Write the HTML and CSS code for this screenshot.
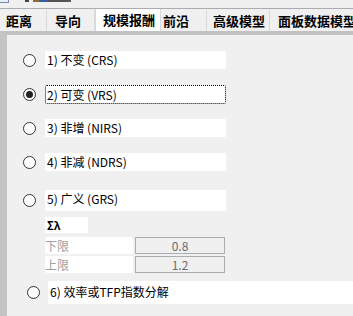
FILE: index.html
```html
<!DOCTYPE html>
<html lang="zh">
<head>
    <meta charset="UTF-8">
    <title>规模报酬</title>
    <link rel="stylesheet" href="styles.css">
</head>
<body>
    <!-- window strip -->
    <div class="topbar">
        <span class="win-box"></span>
        <span class="win-icon"></span>
    </div>

    <!-- Tabs -->
    <div class="tabs">
        <div class="tab tab-1">距离</div>
        <div class="tab tab-2">导向</div>
        <div class="tab tab-active">规模报酬</div>
        <div class="tab tab-4">前沿</div>
        <div class="tab tab-5">高级模型</div>
        <div class="tab tab-6">面板数据模型</div>
    </div>

    <!-- Panel -->
    <div class="panel">
        <div class="options">
            <div class="option">
                <span class="radio"></span>
                <span class="label">1) 不变 (CRS)</span>
            </div>
            <div class="option">
                <span class="radio checked"></span>
                <span class="label focused">2) 可变 (VRS)</span>
            </div>
            <div class="option">
                <span class="radio"></span>
                <span class="label">3) 非增 (NIRS)</span>
            </div>
            <div class="option">
                <span class="radio"></span>
                <span class="label">4) 非减 (NDRS)</span>
            </div>
            <div class="option option-5">
                <span class="radio"></span>
                <span class="label">5) 广义 (GRS)</span>
            </div>
        </div>

        <div class="bounds">
            <div class="sigma">Σλ</div>
            <div class="bound-row">
                <span class="bound-label">下限</span>
                <span class="bound-input">0.8</span>
            </div>
            <div class="bound-row">
                <span class="bound-label">上限</span>
                <span class="bound-input">1.2</span>
            </div>
        </div>

        <div class="option option-6">
            <span class="radio"></span>
            <span class="label wide">6) 效率或TFP指数分解</span>
        </div>
    </div>
</body>
</html>
```

FILE: styles.css
```css
/* Global */
body {
    margin: 0;
    padding: 0;
    width: 353px;
    height: 316px;
    overflow: hidden;
    background: #f0f0f0;
    font-family: "Noto Sans CJK SC", "Liberation Sans", sans-serif;
    font-size: 12px;
    color: #000;
}

/* Window strip */
.topbar {
    height: 8px;
    display: flex;
    align-items: flex-start;
    background: #f0f0f0;
    border-bottom: 1px solid #a9adb3;
}

.win-box {
    width: 8px;
    height: 2px;
    border-right: 1px solid #7a8ca8;
    border-bottom: 1px solid #7a8ca8;
    background: #e8eef6;
}

.win-icon {
    margin-left: 16px;
    width: 46px;
    height: 2px;
    background: linear-gradient(90deg, #444 0 4px, transparent 4px 8px, #8a6b3a 8px 14px, #3c5da0 14px 22px, #555 22px 46px);
}

/* Tabs */
.tabs {
    display: flex;
    height: 22px;
    white-space: nowrap;
    overflow: hidden;
}

.tab {
    box-sizing: border-box;
    height: 22px;
    margin-top: 1px;
    padding-left: 6px;
    font-size: 13px;
    font-weight: bold;
    line-height: 21px;
    background: #f0f0f0;
    border-right: 1px solid #d9d9d9;
    flex-shrink: 0;
}

.tab-1 { width: 47px; }
.tab-2 { width: 48px; padding-left: 8px; }
.tab-4 { width: 46px; padding-left: 2px; }
.tab-5 { width: 63px; padding-left: 6px; }
.tab-6 { width: 90px; padding-left: 8px; border-right: none; }

.tab-active {
    width: 66px;
    height: 23px;
    margin-top: 0;
    padding-left: 7px;
    background: #fff;
    border-right: 1px solid #d9d9d9;
    border-left: 1px solid #d9d9d9;
    line-height: 22px;
}

/* Panel */
.panel {
    box-sizing: border-box;
    height: 285px;
    border-top: 4px solid #c2c2c2;
    border-left: 7px solid #c4c4c4;
    padding-top: 16px;
    background: #f0f0f0;
}

.options {
    display: flex;
    flex-direction: column;
    gap: 16px;
}

.option {
    display: flex;
    align-items: center;
    height: 18px;
}

.option-5 {
    margin-top: 3px;
    height: 21px;
}

.radio {
    box-sizing: border-box;
    width: 13px;
    height: 13px;
    margin-left: 16px;
    margin-right: 9px;
    border: 1px solid #333;
    border-radius: 50%;
    background: #fff;
    display: flex;
    align-items: center;
    justify-content: center;
}

.radio.checked::after {
    content: "";
    width: 7px;
    height: 7px;
    border-radius: 50%;
    background: #222;
}

.label {
    box-sizing: border-box;
    width: 181px;
    height: 100%;
    padding-left: 2px;
    background: #fff;
    line-height: 17px;
}

.label.focused {
    height: 19px;
    border: 1px dotted #000;
    border-radius: 2px;
    padding-left: 1px;
}

/* Bounds */
.bounds {
    margin-top: 6px;
    margin-left: 38px;
    display: flex;
    flex-direction: column;
    gap: 2px;
}

.sigma {
    width: 43px;
    height: 16px;
    padding-left: 2px;
    box-sizing: border-box;
    background: #fff;
    font-size: 11px;
    font-weight: bold;
    line-height: 16px;
    margin-bottom: 2px;
}

.bound-row {
    display: flex;
    gap: 2px;
    height: 17px;
}

.bound-label {
    width: 88px;
    background: #fff;
    color: #a0a0a0;
    line-height: 17px;
    border-radius: 2px;
}

.bound-input {
    box-sizing: border-box;
    width: 90px;
    border: 1px solid #adadad;
    background: #f0f0f0;
    color: #6d6d6d;
    text-align: center;
    line-height: 15px;
}

/* Last option */
.option-6 {
    margin-top: 8px;
    height: 23px;
}

.option-6 .radio {
    margin-left: 20px;
    margin-right: 8px;
}

.label.wide {
    width: 305px;
    padding-left: 2px;
    line-height: 22px;
}
```
